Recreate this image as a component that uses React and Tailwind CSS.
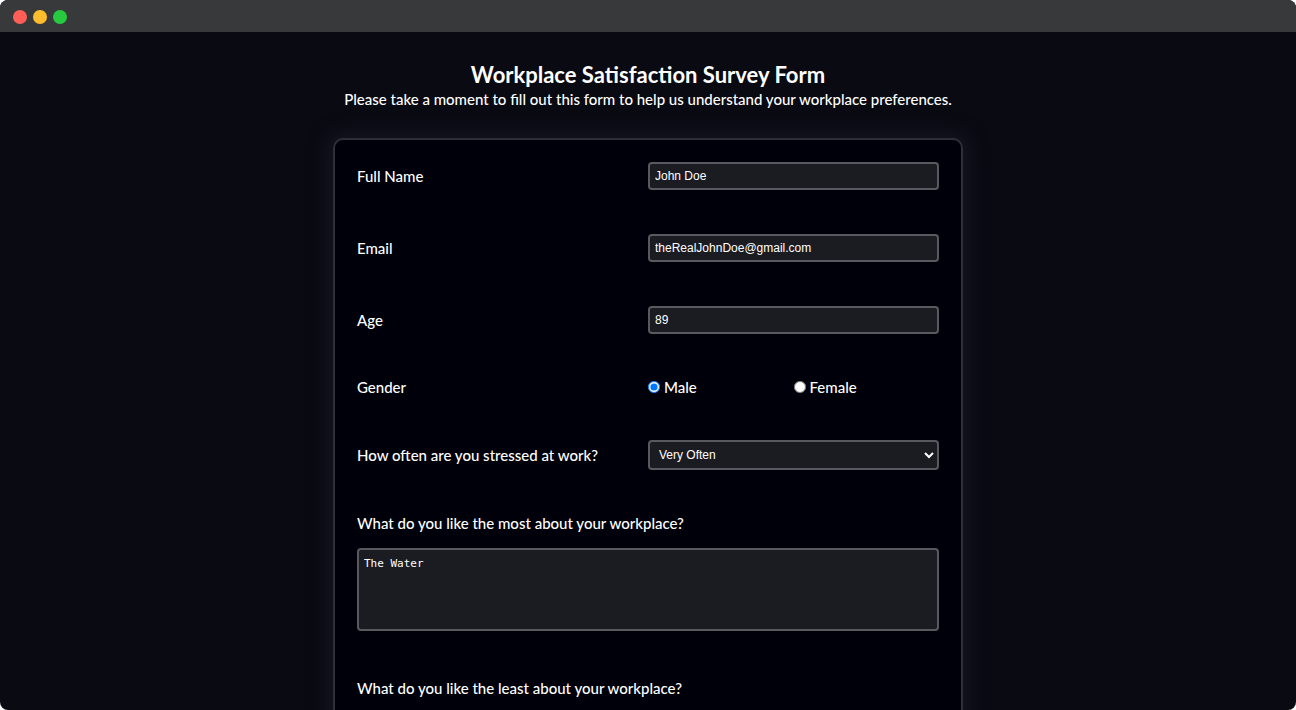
const fieldStyle =
  'w-full rounded border-2 border-[#58595f] bg-[#1b1b22] text-white outline-none';
const inputFont = "font-['Liberation_Sans',Arial,sans-serif] text-xs";

function TextField({ id, label, type = 'text', value }) {
  return (
    <div className="grid grid-cols-2 items-center">
      <label htmlFor={id}>{label}</label>
      <input
        id={id}
        name={id}
        type={type}
        defaultValue={value}
        className={`${fieldStyle} ${inputFont} h-7 px-[5px]`}
      />
    </div>
  );
}

function RadioOption({ id, label, checked }) {
  return (
    <div className="flex items-center gap-1">
      <input
        id={id}
        type="radio"
        name="gender"
        value={id}
        defaultChecked={checked}
        className="size-3"
      />
      <label htmlFor={id}>{label}</label>
    </div>
  );
}

function LongAnswer({ id, label, value }) {
  return (
    <div className="flex flex-col gap-4 pb-1">
      <label htmlFor={id}>{label}</label>
      <textarea
        id={id}
        name={id}
        defaultValue={value}
        className={`${fieldStyle} block h-[83px] resize-none px-[5px] py-1.5 font-['DejaVu_Sans_Mono',monospace] text-[11px] leading-4`}
      />
    </div>
  );
}

export default function App() {
  return (
    <div className="h-screen bg-white">
      <div className="flex h-full flex-col overflow-hidden rounded-lg bg-[#0a0a12] font-[Lato,sans-serif] text-[15px] leading-[18px] font-medium text-white">
        <header className="flex h-8 shrink-0 items-center gap-1.5 bg-[#38393a] px-[13px] pt-0.5">
          <span className="size-3.5 rounded-full bg-[#ff5f56]" />
          <span className="size-3.5 rounded-full bg-[#ffbd2e]" />
          <span className="size-3.5 rounded-full bg-[#27c93f]" />
        </header>
        <main className="flex min-h-0 flex-1 flex-col items-center px-4 pt-7">
          <h1 className="text-[22px] leading-[30px] font-bold">Workplace Satisfaction Survey Form</h1>
          <p>Please take a moment to fill out this form to help us understand your workplace preferences.</p>
          <form className="mt-[30px] flex w-full max-w-[630px] shrink-0 flex-col gap-11 rounded-[10px] border-2 border-[#2f2f37] bg-[#00000a] p-[22px] shadow-[0_0_20px_4px_#171724]">
            <TextField id="name" label="Full Name" value="John Doe" />
            <TextField id="email" label="Email" type="email" value="theRealJohnDoe@gmail.com" />
            <TextField id="age" label="Age" type="number" value="89" />
            <div role="radiogroup" aria-labelledby="gender-label" className="grid grid-cols-2 items-center">
              <span id="gender-label">Gender</span>
              <div className="grid grid-cols-2">
                <RadioOption id="male" label="Male" checked />
                <RadioOption id="female" label="Female" />
              </div>
            </div>
            <div className="grid grid-cols-2 items-center">
              <label htmlFor="stress">How often are you stressed at work?</label>
              <select id="stress" name="stress" defaultValue="Very Often" className={`${fieldStyle} ${inputFont} h-[30px] px-[5px]`}>
                <option>Very Often</option>
              </select>
            </div>
            <LongAnswer id="most" label="What do you like the most about your workplace?" value="The Water" />
            <LongAnswer id="least" label="What do you like the least about your workplace?" value="" />
          </form>
        </main>
      </div>
    </div>
  );
}
